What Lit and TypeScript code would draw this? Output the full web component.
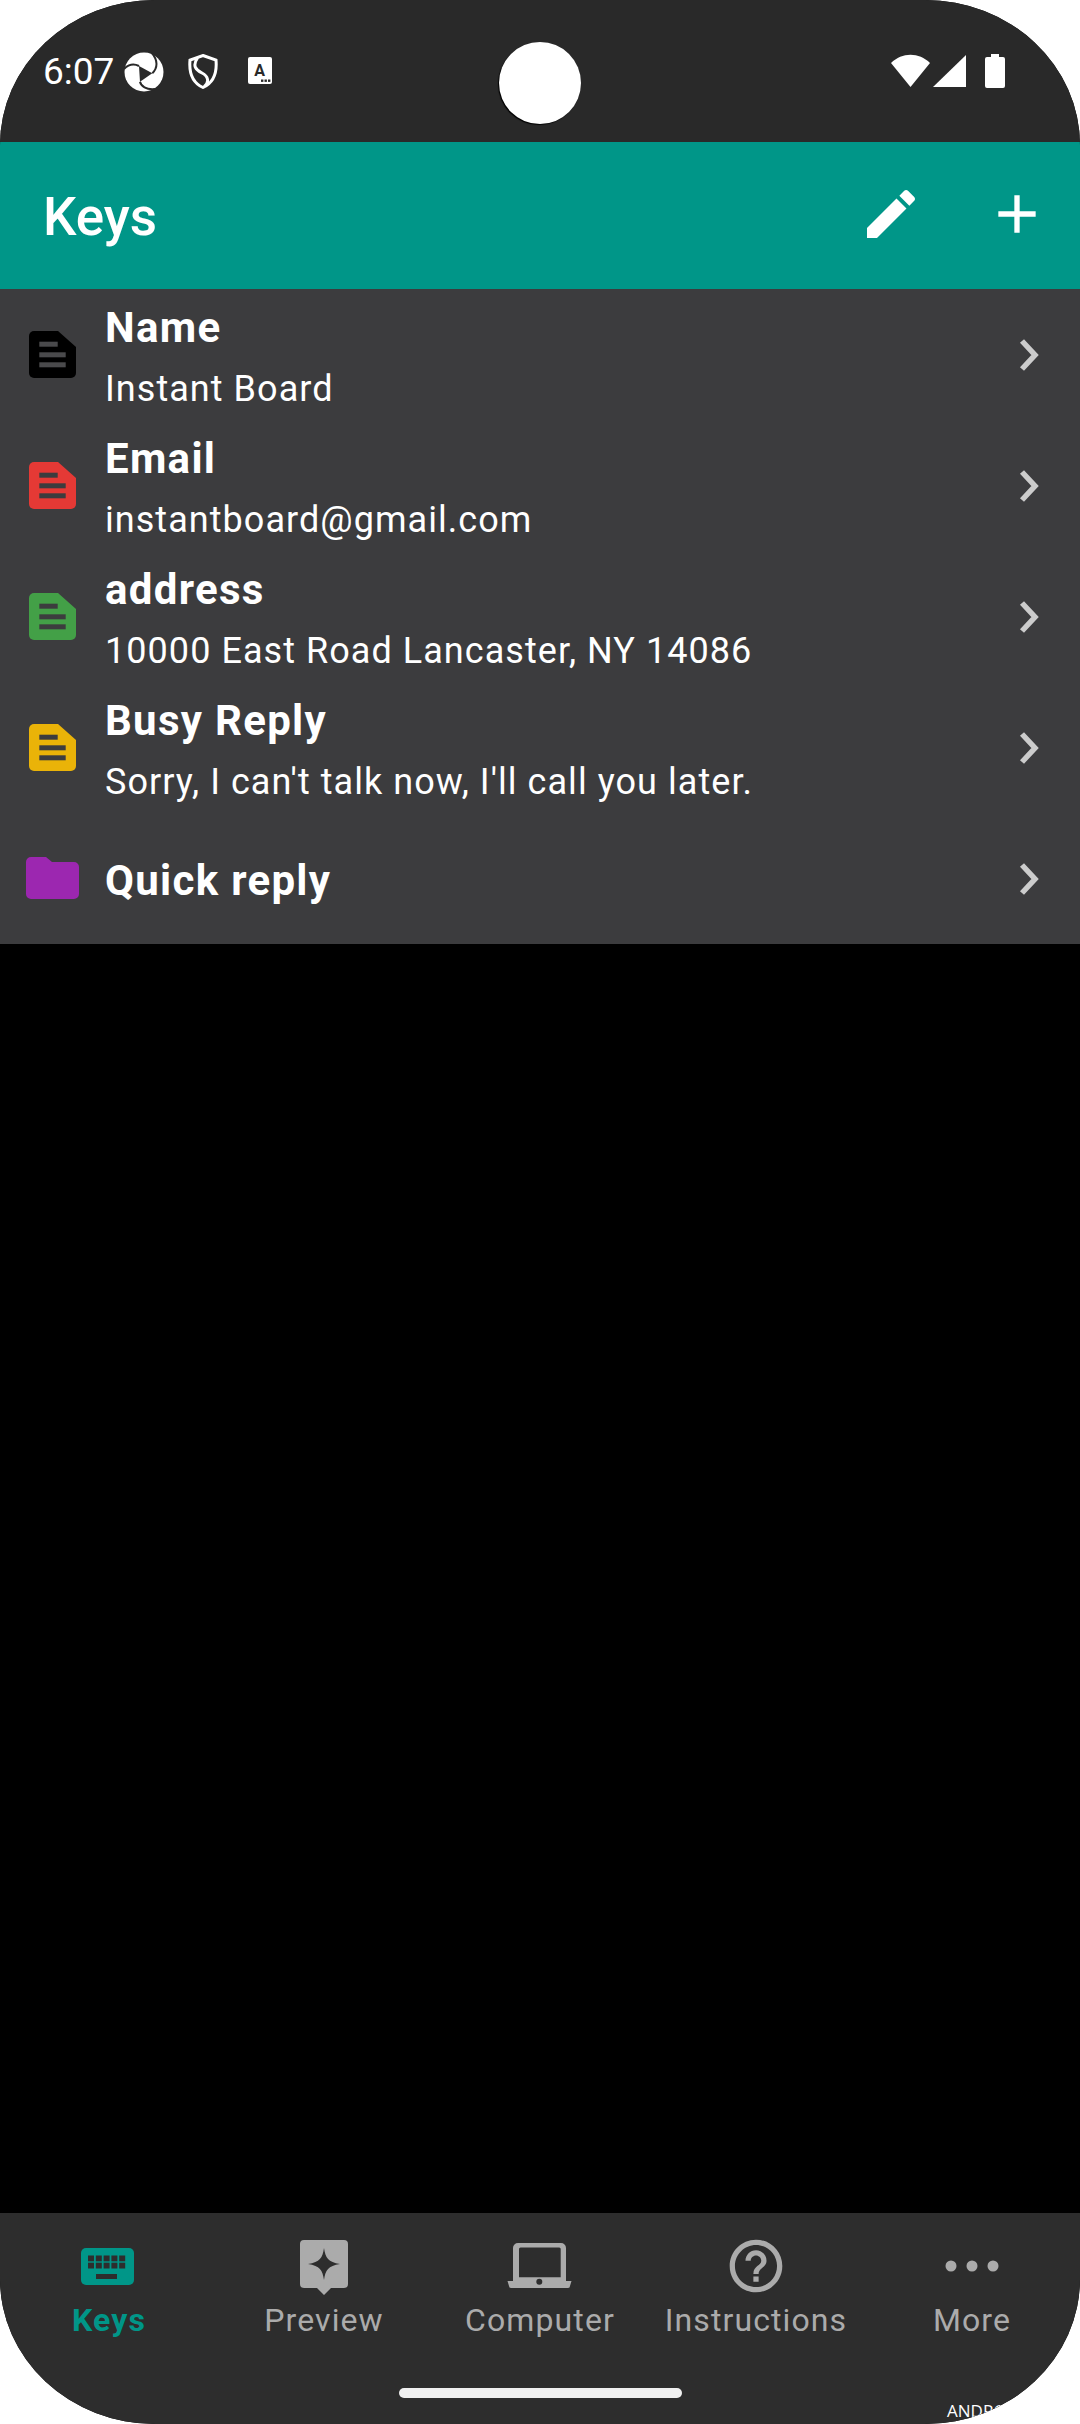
import { LitElement, html, css, svg } from "lit";
import { customElement } from "lit/decorators.js";

const rows = [
  { t: "Name", s: "Instant Board", c: "#000000", bar: "#4a4a4c" },
  { t: "Email", s: "instantboard@gmail.com", c: "#e53935", bar: "#3c3c3e" },
  { t: "address", s: "10000 East Road Lancaster, NY 14086", c: "#43a047", bar: "#3c3c3e" },
  { t: "Busy Reply", s: "Sorry, I can't talk now, I'll call you later.", c: "#eab308", bar: "#3c3c3e" },
];

const doc = (c: string, bar: string) => html`<svg class="doc" viewBox="0 0 47 47">
  <path fill=${c} d="M5 0H29L47 16V42a5 5 0 0 1-5 5H5a5 5 0 0 1-5-5V5a5 5 0 0 1 5-5Z"/>
  <rect fill=${bar} x="10.3" y="10.7" width="18.4" height="5"/>
  <rect fill=${bar} x="10.3" y="21.3" width="26.4" height="5"/>
  <rect fill=${bar} x="10.3" y="31.3" width="26.4" height="5"/>
</svg>`;

const chevron = html`<svg class="chev" viewBox="0 0 24 36"><path d="M6 4L19 18L6 32" fill="none" stroke="#cccccc" stroke-width="5.500"/></svg>`;

const nav = [
  {
    l: "Keys", on: true,
    i: svg`<rect x="3" y="12" width="53" height="37" rx="5" fill="#009688"/>
      ${[0, 1].map((r) => [0, 1, 2, 3, 4].map((k) => svg`<rect x=${10 + k * 7.8} y=${19.5 + r * 7.2} width="6" height="5.8" fill="#2d2d2d"/>`))}
      <rect x="18" y="38" width="21" height="5" fill="#2d2d2d"/>`,
  },
  {
    l: "Preview",
    i: svg`<path fill="#ababab" d="M10 4H50a4 4 0 0 1 4 4V48a4 4 0 0 1-4 4H37L30 59L23 52H10a4 4 0 0 1-4-4V8a4 4 0 0 1 4-4Z"/>
      <path fill="#2d2d2d" d="M30 12C31.500 22 34 26 46 28C34 30 31.500 34 30 44C28.500 34 26 30 14 28C26 26 28.500 22 30 12Z"/>`,
  },
  {
    l: "Computer",
    i: svg`<path fill="#ababab" fill-rule="evenodd" d="M3 45V12a5 5 0 0 1 5-5H51a5 5 0 0 1 5 5V45H61.500L60 50a2 2 0 0 1-2 2H1a2 2 0 0 1-2-2L-2.500 45ZM9 13V41.300H50.700V13a1.500 1.500 0 0 0-1.500-1.500H10.500a1.500 1.500 0 0 0-1.500 1.500Z"/>
      <circle cx="29.300" cy="45.700" r="3" fill="#2d2d2d"/>`,
  },
  {
    l: "Instructions",
    i: svg`<svg viewBox="0.6 0.6 22.8 22.8" x="0" y="0" width="60" height="60"><path fill="#ababab" d="M11 18h2v-2h-2v2zm1-16C6.480 2 2 6.480 2 12s4.480 10 10 10 10-4.480 10-10S17.520 2 12 2zm0 18c-4.410 0-8-3.590-8-8s3.590-8 8-8 8 3.590 8 8-3.590 8-8 8zm0-14c-2.210 0-4 1.790-4 4h2c0-1.100.9-2 2-2s2 .9 2 2c0 2-3 1.750-3 5h2c0-2.250 3-2.500 3-5 0-2.210-1.790-4-4-4z"/></svg>`,
  },
  {
    l: "More",
    i: svg`<circle cx="9" cy="30" r="5.500" fill="#ababab"/><circle cx="30" cy="30" r="5.500" fill="#ababab"/><circle cx="51" cy="30" r="5.500" fill="#ababab"/>`,
  },
];

@customElement("app-root")
export class AppRoot extends LitElement {
  static styles = css`
    :host { display: block; width: 1080px; height: 2424px; background: #fff; font-family: Roboto, "Liberation Sans", sans-serif; }
    .frame { position: relative; width: 1080px; height: 2424px; border-radius: 155px / 145px; overflow: hidden; background: #000; display: flex; flex-direction: column; }
    .status { height: 142px; background: #292929; display: flex; align-items: flex-start; padding: 52px 75px 0 43px; box-sizing: border-box; color: #fff; flex: none; }
    .time { font-size: 37px; line-height: 39px; margin-right: 10px; letter-spacing: 0; }
    .ap { width: 40px; height: 40px; margin-right: 24px; }
    .shield { width: 30px; height: 35px; margin: 2px 30px 0 0; }
    .card { width: 24px; height: 27px; margin: 5px 0 0 0; }
    .status .sp { flex: 1; }
    .wifi { width: 39px; height: 33px; margin: 2px 3px 0 0; }
    .cell { width: 33px; height: 32px; margin: 3px 19px 0 0; }
    .batt { width: 20px; height: 34px; margin-top: 2px; }
    .cam { position: absolute; left: 499px; top: 42px; width: 82px; height: 82px; border-radius: 50%; background: #fff; box-shadow: -1px 1px 1px #000; }
    .head { height: 147px; background: #009688; display: flex; align-items: center; padding: 0 12px 0 43px; box-sizing: border-box; flex: none; color: #fff; }
    .head h1 { font-size: 53px; font-weight: 500; margin: 3px 0 0; flex: 1; }
    .head svg { width: 64px; height: 64px; display: block; fill: #fff; margin-top: -4px; }
    .head .pen { margin-right: 62px; }
    .head .plus { width: 64px; margin-right: 19px; }
    .list { background: #3c3c3e; flex: none; }
    .row { height: 131px; display: flex; align-items: center; padding-left: 29px; box-sizing: border-box; color: #fff; }
    .row.last { padding-left: 26px; }
    .doc { width: 47px; height: 47px; flex: none; margin-right: 29px; }
    .folder { width: 53px; height: 42px; flex: none; margin-right: 26px; margin-top: -2px; }
    .txt { flex: 1; display: flex; flex-direction: column; }
    .t { font-size: 42px; font-weight: 700; line-height: 48px; letter-spacing: 1.3px; margin-top: 5px; }
    .s { font-size: 36px; line-height: 44px; letter-spacing: 1.05px; margin-top: 15px; }
    .t.solo { margin-top: 5px; }
    .chev { width: 24px; height: 36px; margin-right: 40px; flex: none; }
    .gap { flex: 1; }
    .nav { height: 211px; background: #2d2d2d; flex: none; display: flex; flex-direction: column; align-items: center; box-sizing: border-box; padding-top: 23px; }
    .tabs { display: grid; grid-template-columns: repeat(5, 216px); width: 1080px; }
    .tab { display: flex; flex-direction: column; align-items: center; color: #ababab; font-size: 32px; letter-spacing: 1.1px; }
    .tab svg { width: 60px; height: 60px; display: block; overflow: visible; }
    .tab span { line-height: 48px; }
    .tab.on { color: #009688; font-weight: 700; }
    .tab.on span { margin-left: 2px; }
    .pill { width: 283px; height: 10px; border-radius: 5px; background: #f0f0f0; margin-top: 44px; }
    .mark { position: absolute; left: 947px; top: 2399px; font: 17px "Open Sans", sans-serif; color: #fff; }
  `;

  render() {
    return html`<div class="frame">
      <div class="status">
        <span class="time">6:07</span>
        <svg class="ap" viewBox="0 0 40 40">
          <circle cx="20" cy="20" r="19.500" fill="#fff"/>
          <path d="M15 14L28.300 21.300L16 29.700Z" fill="#292929"/>
          <path d="M27.500 0.500C34 8 34 16 28.300 21.300M0 17C5 12 10 11.500 15 14M16 29.700C17 34 22 38 31 37" fill="none" stroke="#292929" stroke-width="2"/>
        </svg>
        <svg class="shield" viewBox="0 0 30 35">
          <path d="M15 1.500L28 6C29 17 27 28 15 33.500C3 28 1 17 2 6Z M9.500 4C4 12 8 16 14 19C20 22 22 28 16 33" fill="none" stroke="#fff" stroke-width="3"/>
        </svg>
        <svg class="card" viewBox="0 0 24 27">
          <rect width="24" height="27" rx="2" fill="#fff"/>
          <text x="11.500" y="19" text-anchor="middle" font-size="16" font-weight="700" font-family="Roboto" fill="#292929">A</text>
          <rect x="13" y="22.500" width="2.400" height="2.400" fill="#292929"/><rect x="16.500" y="22.500" width="2.400" height="2.400" fill="#292929"/><rect x="20" y="22.500" width="2.400" height="2.400" fill="#292929"/>
        </svg>
        <span class="sp"></span>
        <svg class="wifi" viewBox="0 0 39 33"><path fill="#fff" d="M0 9C11 -2 28 -2 39 9L19.500 33Z"/></svg>
        <svg class="cell" viewBox="0 0 33 32"><path fill="#fff" d="M33 0V32H0Z"/></svg>
        <svg class="batt" viewBox="0 0 20 34"><path fill="#fff" d="M6 0H14V3H18a2 2 0 0 1 2 2V32a2 2 0 0 1-2 2H2a2 2 0 0 1-2-2V5a2 2 0 0 1 2-2H6Z"/></svg>
      </div>
      <div class="cam"></div>
      <div class="head">
        <h1>Keys</h1>
        <svg class="pen" viewBox="0 0 24 24"><path d="M3 17.250V21h3.750L17.810 9.940l-3.750-3.750L3 17.250zM20.710 7.040c.39-.39.39-1.020 0-1.410l-2.340-2.340c-.39-.39-1.020-.39-1.410 0l-1.830 1.830 3.750 3.750 1.830-1.830z"/></svg>
        <svg class="plus" viewBox="0 0 24 24"><path d="M19 13h-6v6h-2v-6H5v-2h6V5h2v6h6v2z"/></svg>
      </div>
      <div class="list">
        ${rows.map(
          (r) => html`<div class="row">
            ${doc(r.c, r.bar)}
            <div class="txt"><div class="t">${r.t}</div><div class="s">${r.s}</div></div>
            ${chevron}
          </div>`
        )}
        <div class="row last">
          <svg class="folder" viewBox="0 0 53 42"><path fill="#9c27b0" d="M5 0H20L26 5H48a5 5 0 0 1 5 5V37a5 5 0 0 1-5 5H5a5 5 0 0 1-5-5V5a5 5 0 0 1 5-5Z"/></svg>
          <div class="txt"><div class="t solo">Quick reply</div></div>
          ${chevron}
        </div>
      </div>
      <div class="gap"></div>
      <div class="nav">
        <div class="tabs">
          ${nav.map(
            (n) => html`<div class="tab ${n.on ? "on" : ""}"><svg viewBox="0 0 60 60">${n.i}</svg><span>${n.l}</span></div>`
          )}
        </div>
        <div class="pill"></div>
      </div>
      <div class="mark">ANDROID</div>
    </div>`;
  }
}
